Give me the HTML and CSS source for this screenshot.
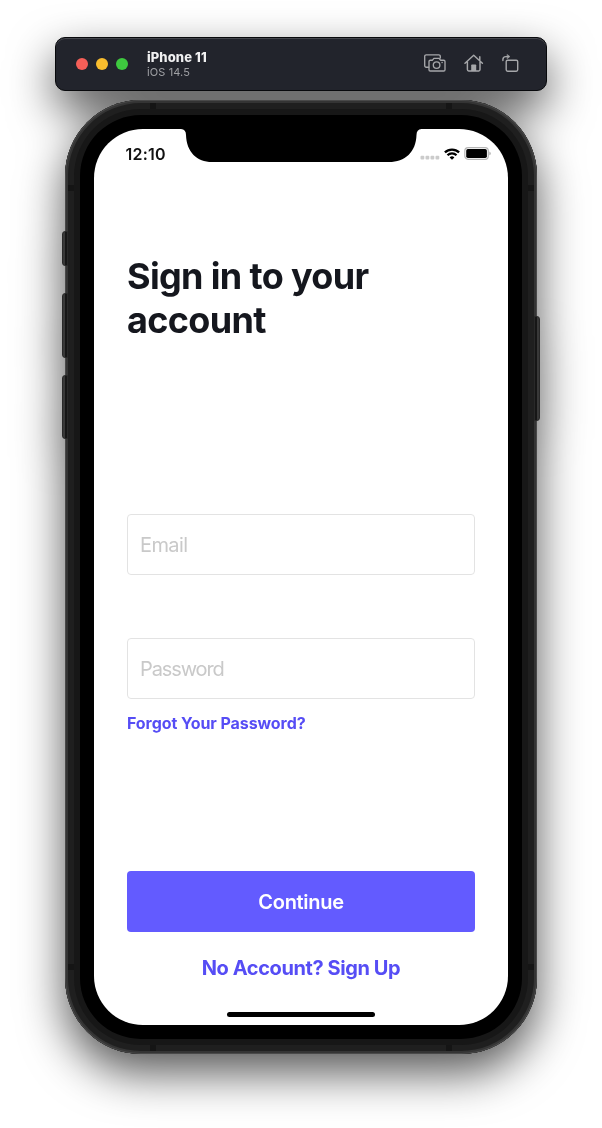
FILE: index.html
```html
<!DOCTYPE html>
<html lang="en">
<head>
<meta charset="utf-8">
<title>iPhone 11</title>
<link rel="stylesheet" href="styles.css">
</head>
<body>
<div class="simulator">
  <header class="toolbar">
    <div class="lights"><i class="light close"></i><i class="light minimize"></i><i class="light expand"></i></div>
    <div class="device">
      <div class="device-name">iPhone 11</div>
      <div class="device-os">iOS 14.5</div>
    </div>
    <div class="tools">
      <svg width="22" height="18" viewBox="0 0 22 18" fill="none" stroke="#a6a7aa" stroke-width="1.35" stroke-linejoin="round" stroke-linecap="round">
        <path d="M4.600 13.200H2.200a1.500 1.500 0 0 1-1.500-1.500V2.300A1.500 1.500 0 0 1 2.200.8h12.600a1.500 1.500 0 0 1 1.500 1.500V4"/>
        <path d="M6.300 6.200h2.200l1.400-1.900h5.200l1.400 1.900h3.200a1.300 1.300 0 0 1 1.300 1.300v8.200a1.300 1.300 0 0 1-1.300 1.300H6.300A1.300 1.300 0 0 1 5 15.700V7.500a1.300 1.300 0 0 1 1.300-1.300z"/>
        <circle cx="12.600" cy="11.100" r="3.300"/><path d="M18 8.500h.2"/>
      </svg>
      <svg width="20" height="18" viewBox="0 0 20 18" fill="none" stroke="#a6a7aa" stroke-width="1.450" stroke-linejoin="round" stroke-linecap="round">
        <path d="M1 9.200 9.700 1.200l8.700 8M15.800 6V2.700M3.400 7.800v7.800q0 1.300 1.300 1.300h10q1.300 0 1.300-1.300V7.800"/>
        <path d="M7.200 17v-5.700q0-.8.800-.8h3.400q.8 0 .8.800V17z" fill="#a6a7aa" stroke="none"/>
      </svg>
      <svg width="17" height="19" viewBox="0 0 17 19" fill="none" stroke="#a6a7aa" stroke-width="1.400" stroke-linejoin="round" stroke-linecap="round">
        <rect x="4.200" y="6.200" width="11.500" height="11" rx="1.400"/>
        <path d="M.9 6.500V5.500q0-2.900 3-2.900h2.600"/>
        <path d="M5.300.5 8 2.600 5.300 4.700z" fill="#a6a7aa" stroke-width=".4"/>
      </svg>
    </div>
  </header>

  <div class="phone">
    <i class="key mute"></i><i class="key vol-up"></i><i class="key vol-down"></i><i class="key power"></i>
    <i class="band top-l"></i><i class="band top-r"></i><i class="band bot-l"></i><i class="band bot-r"></i>
    <i class="band left-t"></i><i class="band left-b"></i><i class="band right-t"></i><i class="band right-b"></i>
    <main class="screen">
      <svg class="notch" width="248" height="34" viewBox="0 0 248 34"><path d="M3 0Q8 .3 8 6C8.500 23 19 33 34 33H211C227 33 238 23 238.500 6Q238.500.3 243.500 0z"/></svg>
      <div class="status">
        <span class="time">12:10</span>
        <div class="indicators">
          <svg width="20" height="5" viewBox="0 0 20 5" fill="#cbcbcb"><rect x=".5" y=".7" width="3.800" height="3.800" rx="1"/><rect x="5.500" y=".7" width="3.800" height="3.800" rx="1"/><rect x="10.500" y=".7" width="3.800" height="3.800" rx="1"/><rect x="15.500" y=".7" width="3.800" height="3.800" rx="1"/></svg>
          <svg class="wifi" width="16" height="12" viewBox="0 0 16 12" fill="none" stroke="#000" stroke-width="2.300"><path d="M.9 4.400a10.300 10.300 0 0 1 14.200 0M3.500 7.200a6.400 6.400 0 0 1 9 0"/><path d="M5.600 9.400a3.400 3.400 0 0 1 4.800 0L8 11.800z" fill="#000" stroke="none"/></svg>
          <svg class="battery" width="27" height="13" viewBox="0 0 27 13"><rect x=".8" y=".6" width="23.500" height="11.800" rx="3.300" fill="#fff" stroke="#b5b5b5" stroke-width="1.200"/><rect x="2.200" y="2" width="20.700" height="9" rx="1.700"/><path d="M25.400 4.500q1.300.5 1.300 1.900t-1.300 1.900z" fill="#aaa"/></svg>
        </div>
      </div>
      <h1 class="title">Sign in to your<br>account</h1>
      <form class="form">
        <input class="field" type="email" placeholder="Email">
        <input class="field password" type="password" placeholder="Password">
        <a class="forgot">Forgot Your Password?</a>
        <button class="continue" type="button">Continue</button>
        <a class="signup">No Account? Sign Up</a>
      </form>
      <div class="home-bar"></div>
    </main>
  </div>
</div>
</body>
</html>
```
FILE: styles.css
```css
* { box-sizing: border-box; }
body { margin: 0; background: #fff; font-family: Inter, "Liberation Sans", sans-serif; overflow: hidden; }
.simulator {
  height: 1128px; padding-top: 37px;
  display: flex; flex-direction: column; align-items: center; gap: 9px;
  filter: drop-shadow(0 19px 23px rgba(0, 0, 0, .66));
}
.toolbar {
  width: 492px; height: 54px; padding: 0 27px 0 21px;
  display: flex; align-items: center;
  background: #22242c; border: 1px solid #08090c; border-radius: 10px;
  box-shadow: inset 0 1px 0 #44464c;
}
.lights { display: flex; gap: 8px; padding-right: 19px; margin-left: -1px; }
.light { width: 12px; height: 12px; border-radius: 50%; }
.close { background: #f55f58; }
.minimize { background: #f9bd2e; }
.expand { background: #3ec93f; }
.device-name { color: #f0f0f1; font-size: 13px; line-height: 15px; font-weight: 800; letter-spacing: .1px; }
.device-os { color: #a0a1a5; font-size: 11px; line-height: 14px; letter-spacing: .1px; }
.tools { margin: -2px 0 0 auto; display: flex; align-items: center; gap: 18px; }

.phone {
  position: relative; width: 472px; height: 954px; padding: 29px;
  background: #000; border-radius: 76px; flex: none;
  box-shadow: inset 0 0 0 1px #494949, inset 0 0 0 3px #343434, inset 0 0 0 9px #1f1f1f, inset 0 0 0 15px #171717;
}
.key { position: absolute; width: 6px; left: -3px; background: linear-gradient(90deg, #2d2d2d, #484848 30%, #161616 55%); border: 1px solid #292929; border-radius: 3px 0 0 3px; }
.mute { top: 131px; height: 35px; }
.vol-up { top: 193px; height: 65px; }
.vol-down { top: 275px; height: 64px; }
.power { left: auto; right: -3px; top: 216px; height: 105px; transform: scaleX(-1); }
.band { position: absolute; width: 6px; height: 6px; background: #151515; }
.top-l, .top-r { top: 3px; }
.bot-l, .bot-r { bottom: 3px; }
.top-l, .bot-l { left: 85px; }
.top-r, .bot-r { right: 85px; }
.left-t, .left-b { left: 3px; }
.right-t, .right-b { right: 3px; }
.left-t, .right-t { top: 85px; }
.left-b, .right-b { bottom: 84px; }

.screen {
  position: relative; width: 414px; height: 896px; padding: 0 33px;
  display: flex; flex-direction: column;
  background: #fff; border-radius: 49px; overflow: hidden;
}
.notch { position: absolute; left: 84px; top: 0; }
.status { height: 49px; margin: 0 -16px 0 -1.5px; display: flex; justify-content: space-between; align-items: center; }
.time { font-size: 16px; font-weight: 600; color: #111; letter-spacing: .25px; }
.indicators { display: flex; align-items: center; gap: 4px; }
.indicators svg:first-child { margin-top: 8px; }
.title { margin: 76px 0 0; font-size: 36px; line-height: 44px; font-weight: 700; letter-spacing: -.65px; color: #15171e; }
.form { display: flex; flex-direction: column; margin-top: 172px; }
.field {
  height: 61px; padding: 0 12px; border: 1px solid #e3e3e3; border-radius: 4px; background: #fff;
  font: 400 20px/24px Inter, sans-serif; letter-spacing: -.6px;
}
.password { margin-top: 63px; letter-spacing: -1.1px; }
.field::placeholder { color: #c9c9c9; opacity: 1; }
.forgot { margin-top: 14px; font-size: 16px; line-height: 20px; font-weight: 700; letter-spacing: -.08px; color: #564df5; }
.continue { height: 61px; margin-top: 138px; border: 0; border-radius: 4px; background: #635bff; color: #fff; font: 600 20px/24px Inter, sans-serif; letter-spacing: -.3px; }
.signup { margin-top: 24px; text-align: center; font-size: 20px; line-height: 24px; font-weight: 650; color: #564df5; letter-spacing: -.4px; }
.home-bar { width: 148px; height: 5px; margin: auto auto 8px; border-radius: 3px; background: #000; }
```
